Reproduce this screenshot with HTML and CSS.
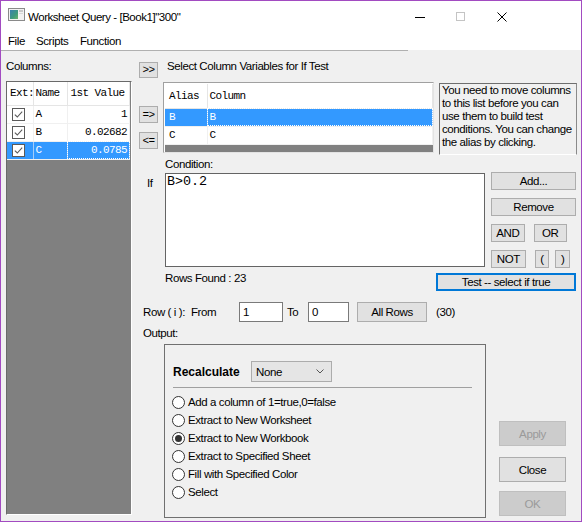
FILE: index.html
```html
<!DOCTYPE html>
<html>
<head>
<meta charset="utf-8">
<link rel="stylesheet" href="styles.css">
</head>
<body>
<div class="window">
  <div class="titlebar">
    <svg class="appicon" width="17" height="13" viewBox="0 0 17 13">
      <defs><linearGradient id="g1" x1="0" y1="0" x2="1" y2="1"><stop offset="0" stop-color="#3a7fb0"/><stop offset="0.6" stop-color="#3d9a7e"/><stop offset="1" stop-color="#6cb36a"/></linearGradient></defs>
      <rect x="0.5" y="0.5" width="16" height="12" fill="#f2f2f2" stroke="#8a8a8a"/>
      <rect x="2" y="2" width="8" height="9" fill="url(#g1)"/>
      <rect x="11" y="2" width="4" height="2" fill="#c9c9c9"/>
      <rect x="11" y="5" width="4" height="1" fill="#d8d8d8"/>
    </svg>
    <span class="title">Worksheet Query - [Book1]"300"</span>
    <div class="controls">
      <span class="ctl"><svg width="10" height="10" viewBox="0 0 10 10"><path d="M0 5.5H10" stroke="#000" stroke-width="1"/></svg></span>
      <span class="ctl"><svg width="9" height="9" viewBox="0 0 9 9"><rect x="0.5" y="0.5" width="8" height="8" fill="none" stroke="#c4c4c4"/></svg></span>
      <span class="ctl"><svg width="10" height="10" viewBox="0 0 10 10"><path d="M0.5 0.5L9.5 9.5M9.5 0.5L0.5 9.5" stroke="#000" stroke-width="1"/></svg></span>
    </div>
  </div>
  <div class="menubar">
    <span class="mi mi-file">File</span>
    <span class="mi mi-scripts">Scripts</span>
    <span class="mi">Function</span>
  </div>
  <div class="menuline"></div>
  <div class="body">
    <div class="left">
      <div class="cols-lbl">Columns:</div>
      <div class="listbox">
        <table class="grid grid1">
          <thead>
            <tr><th class="c-ext">Ext:</th><th class="c-name">Name</th><th class="c-val">1st Value</th></tr>
          </thead>
          <tbody>
            <tr>
              <td class="c-ext"><svg class="chk" width="13" height="13" viewBox="0 0 13 13"><rect x="0.5" y="0.5" width="12" height="12" fill="#fff" stroke="#5a5a5a"/><path d="M2.8 6.6L5.3 9L10.2 3.6" fill="none" stroke="#5a5a5a" stroke-width="1.1"/></svg></td>
              <td class="c-name">A</td><td class="c-val num">1</td>
            </tr>
            <tr>
              <td class="c-ext"><svg class="chk" width="13" height="13" viewBox="0 0 13 13"><rect x="0.5" y="0.5" width="12" height="12" fill="#fff" stroke="#5a5a5a"/><path d="M2.8 6.6L5.3 9L10.2 3.6" fill="none" stroke="#5a5a5a" stroke-width="1.1"/></svg></td>
              <td class="c-name">B</td><td class="c-val num">0.02682</td>
            </tr>
            <tr class="sel">
              <td class="c-ext"><svg class="chk" width="13" height="13" viewBox="0 0 13 13"><rect x="0.5" y="0.5" width="12" height="12" fill="#fff" stroke="#5a5a5a"/><path d="M2.8 6.6L5.3 9L10.2 3.6" fill="none" stroke="#5a5a5a" stroke-width="1.1"/></svg></td>
              <td class="c-name">C</td><td class="c-val num focus">0.0785</td>
            </tr>
          </tbody>
        </table>
      </div>
    </div>
    <div class="right">
      <div class="r1">
        <button class="btn sq mono">&gt;&gt;</button>
        <span class="r1lbl">Select Column Variables for If Test</span>
      </div>
      <div class="r2">
        <div class="arrows">
          <button class="btn sq mono arr1">=&gt;</button>
          <button class="btn sq mono arr2">&lt;=</button>
        </div>
        <div class="listbox2">
          <table class="grid grid2">
            <thead><tr><th class="a-alias">Alias</th><th class="a-col">Column</th></tr></thead>
            <tbody>
              <tr class="sel"><td class="a-alias">B</td><td class="a-col focus">B</td></tr>
              <tr><td class="a-alias">C</td><td class="a-col">C</td></tr>
            </tbody>
          </table>
        </div>
        <div class="hint">You need to move columns<br>to this list before you can<br>use them to build test<br>conditions. You can change<br>the alias by clicking.</div>
      </div>
      <div class="r3">Condition:</div>
      <div class="r4">
        <span class="if-lbl">If</span>
        <div class="cond">B&gt;0.2</div>
        <div class="opbtns">
          <button class="btn wide">Add...</button>
          <button class="btn wide">Remove</button>
          <div class="oprow"><button class="btn op">AND</button><button class="btn op">OR</button></div>
          <div class="oprow"><button class="btn op">NOT</button><button class="btn par">(</button><button class="btn par">)</button></div>
        </div>
      </div>
      <div class="r5">
        <span class="found">Rows Found : 23</span>
        <button class="btn test">Test -- select if true</button>
      </div>
      <div class="r6">
        <span class="rowlbl">Row ( i ):</span>
        <span class="fromlbl">From</span>
        <div class="inp inp-from">1</div>
        <span class="tolbl">To</span>
        <div class="inp inp-to">0</div>
        <button class="btn allrows">All Rows</button>
        <span class="cnt">(30)</span>
      </div>
      <div class="r7">Output:</div>
      <div class="r8">
        <div class="group">
          <div class="recalc">
            <span class="recalc-lbl">Recalculate</span>
            <div class="select"><span>None</span><svg width="8" height="5" viewBox="0 0 8 5"><path d="M0.5 0.5L4 4L7.5 0.5" fill="none" stroke="#555" stroke-width="1"/></svg></div>
          </div>
          <div class="sep"></div>
          <div class="radios">
            <div class="radio"><svg width="13" height="13" viewBox="0 0 13 13"><circle cx="6.5" cy="6.5" r="6" fill="#fff" stroke="#333"/></svg><span>Add a column of 1=true,0=false</span></div>
            <div class="radio"><svg width="13" height="13" viewBox="0 0 13 13"><circle cx="6.5" cy="6.5" r="6" fill="#fff" stroke="#333"/></svg><span>Extract to New Worksheet</span></div>
            <div class="radio"><svg width="13" height="13" viewBox="0 0 13 13"><circle cx="6.5" cy="6.5" r="6" fill="#fff" stroke="#333"/><circle cx="6.5" cy="6.5" r="3.5" fill="#333"/></svg><span>Extract to New Workbook</span></div>
            <div class="radio"><svg width="13" height="13" viewBox="0 0 13 13"><circle cx="6.5" cy="6.5" r="6" fill="#fff" stroke="#333"/></svg><span>Extract to Specified Sheet</span></div>
            <div class="radio"><svg width="13" height="13" viewBox="0 0 13 13"><circle cx="6.5" cy="6.5" r="6" fill="#fff" stroke="#333"/></svg><span>Fill with Specified Color</span></div>
            <div class="radio"><svg width="13" height="13" viewBox="0 0 13 13"><circle cx="6.5" cy="6.5" r="6" fill="#fff" stroke="#333"/></svg><span>Select</span></div>
          </div>
        </div>
        <div class="dlgbtns">
          <button class="btn big disabled b-apply">Apply</button>
          <button class="btn big b-close">Close</button>
          <button class="btn big disabled b-ok">OK</button>
        </div>
      </div>
    </div>
  </div>
</div>
</body>
</html>
```
FILE: styles.css
```css
* { box-sizing: border-box; }
html, body { margin: 0; padding: 0; background: #fff; }
body {
  font-family: "Liberation Sans", Arial, sans-serif;
  font-size: 11.5px;
  letter-spacing: -0.4px;
  color: #000;
}
.window {
  width: 582px;
  height: 522px;
  border: 1px solid #a24bc1;
  background: #f0f0f0;
  display: flex;
  flex-direction: column;
}
/* title bar */
.titlebar {
  height: 31px;
  flex: none;
  background: #fff;
  display: flex;
  align-items: center;
}
.appicon { align-self: flex-start; margin: 7px 0 0 7px; }
.title { margin-left: 3px; font-size: 11.5px; letter-spacing: -0.45px; }
.controls { margin-left: auto; margin-right: 59px; display: flex; }
.ctl { width: 41px; height: 31px; display: flex; align-items: center; justify-content: center; }
/* menu */
.menubar {
  height: 18px;
  flex: none;
  background: #fff;
  display: flex;
  padding-left: 7px;
  line-height: 18px;
}
.mi-file { width: 28px; }
.mi-scripts { width: 44px; }
.menuline { height: 1px; width: 407px; background: #b0b0b0; flex: none; }
/* body */
.body { flex: 1; display: flex; }
.left { width: 131px; flex: none; padding-left: 5px; }
.cols-lbl { margin-top: 8px; line-height: 14px; }
.listbox {
  margin-top: 8px;
  width: 126px;
  height: 434px;
  background: #808080;
  border-top: 1px solid #696969;
  border-left: 1px solid #696969;
  border-right: 1px solid #fff;
  border-bottom: 1px solid #fff;
}
.grid {
  border-collapse: collapse;
  font-family: "Liberation Mono", "DejaVu Sans Mono", monospace;
  font-size: 11px;
  letter-spacing: -0.6px;
  background: #fff;
}
.grid th {
  font-weight: normal;
  text-align: left;
  background: #fff;
  border-right: 1px solid #e5e5e5;
  border-bottom: 1px solid #e5e5e5;
  padding: 0;
}
.grid td { padding: 0; border-right: 1px solid #f0f0f0; border-bottom: 1px solid #f0f0f0; }
.grid1 { width: 123px; table-layout: fixed; }
.grid1 th { height: 23px; }
.grid1 td { height: 18px; }
.grid1 .c-ext { width: 26px; padding-left: 3px; }
.grid1 .c-name { width: 34px; padding-left: 2px; }
.grid1 .c-val { padding-left: 3px; }
.grid1 td.num { text-align: right; padding-right: 2px; }
.grid1 td.c-ext { padding-left: 5px; }
.chk { display: block; }
.grid tr.sel td { background: #3399ff; color: #fff; border-right-color: #a6cdf7; }
.grid td.focus { outline: 1px dotted #fff; outline-offset: -1px; }
/* right */
.right { flex: 1; display: flex; flex-direction: column; }
.btn {
  font-family: inherit;
  font-size: inherit;
  letter-spacing: inherit;
  color: #000;
  background: #e1e1e1;
  border: 1px solid #adadad;
  padding: 0;
  margin: 0;
  display: flex;
  align-items: center;
  justify-content: center;
}
.mono { font-family: "Liberation Mono", monospace; font-size: 11px; letter-spacing: -0.6px; }
.sq { width: 19px; height: 16px; }
.r1 { margin-top: 11px; display: flex; align-items: flex-start; height: 16px; }
.r1 .sq { margin-left: 7px; }
.r1lbl { margin-left: 9px; margin-top: -3px; line-height: 14px; }
.r2 { margin-top: 4px; display: flex; align-items: flex-start; }
.arrows { margin-left: 7px; width: 19px; display: flex; flex-direction: column; }
.arr1 { margin-top: 24px; height: 17px; }
.arr2 { margin-top: 9px; height: 17px; }
.listbox2 {
  margin-left: 5px;
  width: 271px;
  height: 71px;
  background: #808080;
  border-top: 1px solid #a0a0a0;
  border-left: 1px solid #a0a0a0;
  border-right: 1px solid #e3e3e3;
  border-bottom: 1px solid #e3e3e3;
  padding: 1px 0 0 1px;
  box-shadow: inset 1px 1px 0 #fff;
}
.grid2 { width: 100%; table-layout: fixed; }
.grid2 th { height: 24px; }
.grid2 td { height: 18px; }
.grid2 .a-alias { width: 42px; padding-left: 4px; }
.grid2 .a-col { padding-left: 2px; }
.hint {
  margin-left: 5px;
  margin-top: 1px;
  width: 138px;
  height: 72px;
  border-top: 1px solid #6e6e6e;
  border-left: 1px solid #6e6e6e;
  border-right: 1px solid #8a8a8a;
  border-bottom: 1px solid #fff;
  padding: 0 0 0 2px;
  line-height: 13px;
  white-space: nowrap;
}
.r3 { margin-top: 2px; padding-left: 33px; line-height: 14px; }
.r4 { margin-top: 1px; display: flex; align-items: flex-start; }
.if-lbl { width: 33px; padding-left: 15px; margin-top: 4px; line-height: 14px; }
.cond {
  margin-top: 1px;
  width: 320px;
  height: 94px;
  background: #fff;
  border: 1px solid #646464;
  padding-left: 1px;
  font-family: "Liberation Mono", monospace;
  font-size: 13.4px;
  letter-spacing: -0.05px;
  line-height: 16px;
}
.opbtns { margin-left: 6px; width: 85px; display: flex; flex-direction: column; gap: 8px; }
.wide { width: 85px; height: 18px; }
.oprow { display: flex; height: 18px; }
.op { width: 38px; height: 18px; margin-right: 9px; }
.par { width: 16px; height: 18px; margin-right: 6px; }
.r5 { margin-top: 5px; display: flex; align-items: flex-start; height: 18px; }
.found { padding-left: 33px; margin-top: -2px; line-height: 14px; }
.test {
  margin-left: auto;
  margin-right: 5px;
  width: 140px;
  height: 18px;
  border: 2px solid #0078d7;
}
.r6 { margin-top: 11px; display: flex; align-items: center; height: 20px; }
.rowlbl { padding-left: 11px; width: 59px; }
.fromlbl { width: 48px; }
.inp {
  height: 20px;
  background: #fff;
  border: 1px solid #7a7a7a;
  padding-left: 3px;
  line-height: 18px;
}
.inp-from { width: 44px; }
.tolbl { margin-left: 4px; width: 21px; }
.inp-to { width: 41px; }
.allrows { margin-left: 8px; width: 70px; height: 20px; }
.cnt { margin-left: 9px; }
.r7 { margin-top: 4px; padding-left: 11px; line-height: 14px; }
.r8 { margin-top: 4px; display: flex; align-items: flex-start; }
.group {
  margin-left: 32px;
  width: 322px;
  height: 174px;
  border: 1px solid #707070;
  padding-left: 8px;
}
.recalc { margin-top: 16px; display: flex; align-items: center; height: 21px; }
.recalc-lbl { width: 78px; font-weight: bold; font-size: 12px; letter-spacing: 0; }
.select {
  width: 81px;
  height: 21px;
  background: #e5e5e5;
  border: 1px solid #acacac;
  display: flex;
  align-items: center;
  justify-content: space-between;
  padding: 0 7px 0 4px;
}
.sep { margin-top: 5px; width: 299px; height: 1px; background: #a0a0a0; }
.radios { margin-top: 5px; margin-left: -1px; }
.radio { height: 18px; display: flex; align-items: center; }
.radio svg { flex: none; }
.radio span { margin-left: 3px; }
.dlgbtns { margin-left: 13px; width: 67px; display: flex; flex-direction: column; }
.big { width: 67px; height: 25px; }
.b-apply { margin-top: 77px; }
.b-close { margin-top: 11px; }
.b-ok { margin-top: 9px; }
.disabled { background: #cccccc; border-color: #bfbfbf; color: #9a9a9a; }
```
